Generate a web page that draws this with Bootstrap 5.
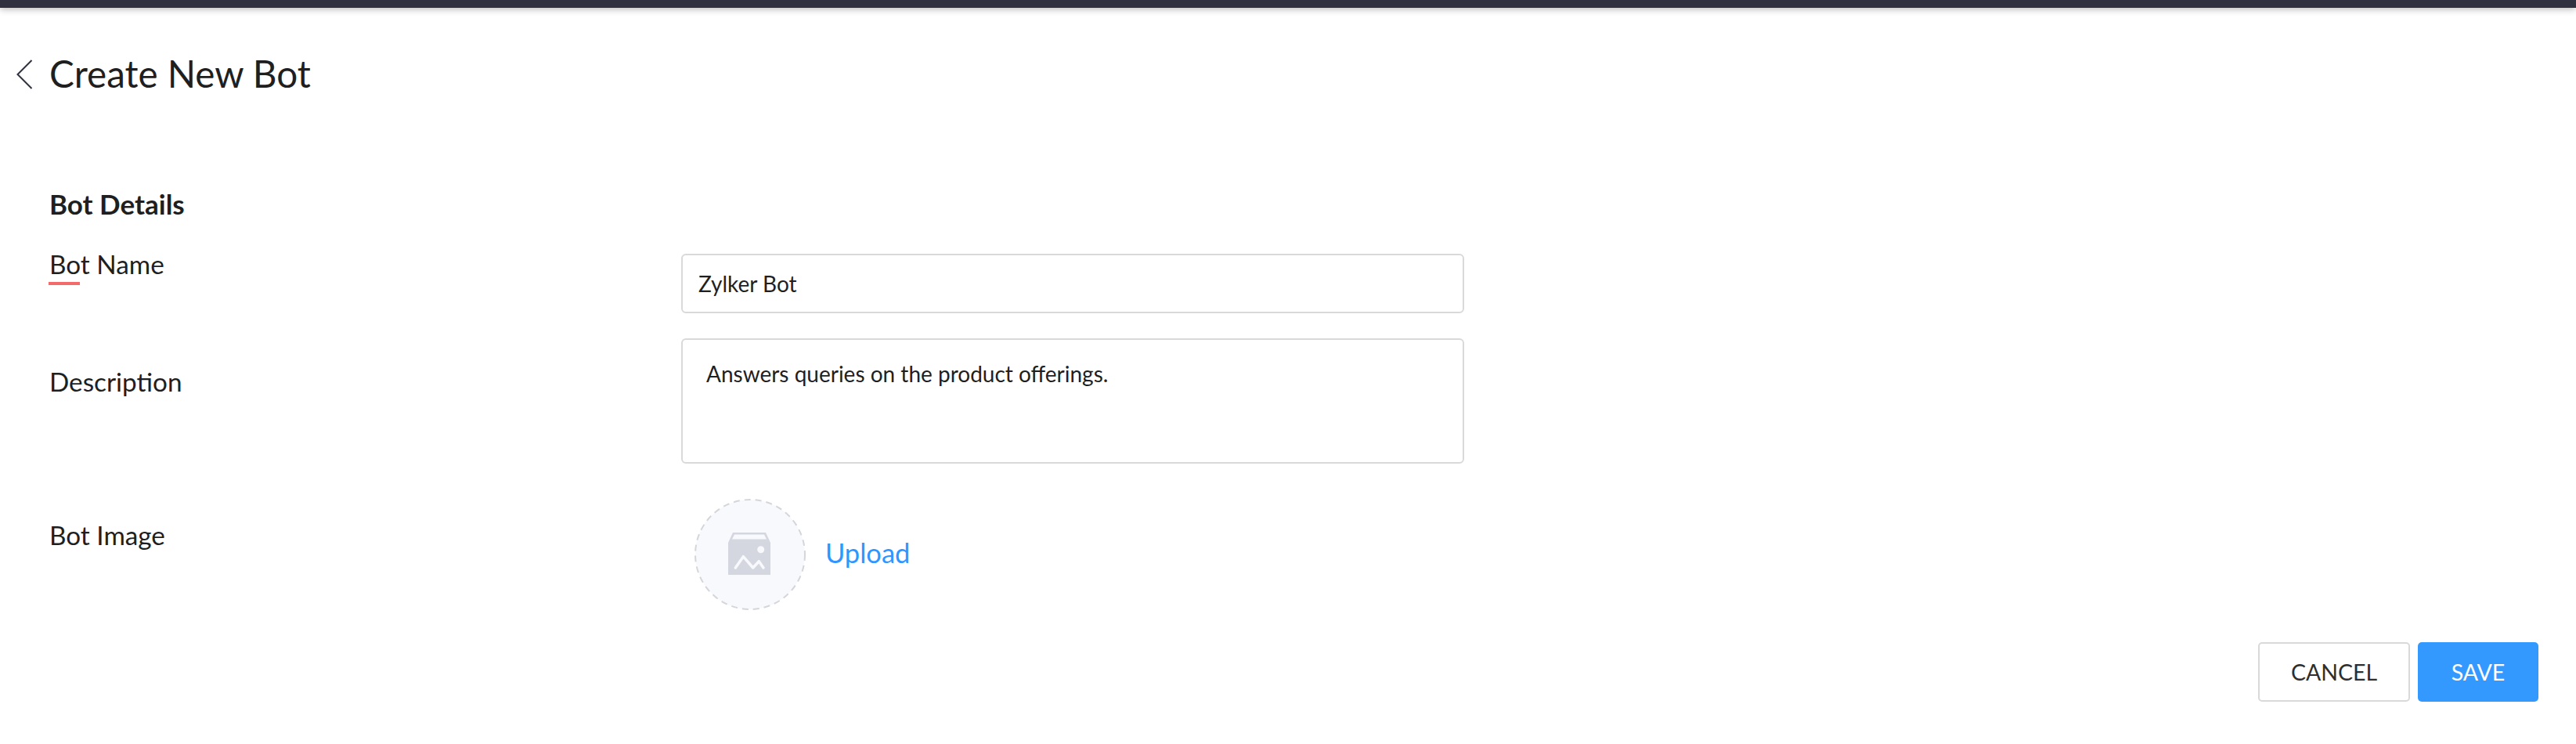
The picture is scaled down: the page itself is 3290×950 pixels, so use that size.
<!doctype html>
<html lang="en">
<head>
<meta charset="utf-8">
<title>Create New Bot</title>
<link href="https://cdn.jsdelivr.net/npm/bootstrap@5.3.0/dist/css/bootstrap.min.css" rel="stylesheet">
<style>
html,body{height:950px;overflow:hidden;background:#fff;}
body{font-family:Lato,"Liberation Sans",sans-serif;color:#1f1f1f;}
.topstrip{height:10px;background:#2f3140;box-shadow:0 2px 8px rgba(0,0,0,.28);}
.titlerow{padding:56px 0 0 20px;}
.backicon{width:24px;height:40px;margin:2px 19px 0 0;flex:none;}
.pagetitle{font-size:47.600px;font-weight:400;line-height:56px;margin:0;color:#1f1f1f;}
.formzone{padding:118px 48px 0 63px;}
.sectionhead{font-size:35px;font-weight:700;line-height:40px;margin:0;height:77px;color:#1f1f1f;}
.fieldrow{display:flex;}
.fieldlabel{width:807px;flex:none;font-size:33.300px;line-height:40px;margin:0;position:relative;}
.rowname{margin-bottom:32px;}
.rowname .fieldbox{margin-top:7px;}
.rowdesc{margin-bottom:45px;}
.rowdesc .fieldlabel{padding-top:35px;}
.rowimg{margin-bottom:41px;}
.rowimg .fieldlabel{padding-top:26px;}
.fieldbox.form-control{width:1000px;flex:none;border:2px solid #d9d9d9;border-radius:6px;color:#1f1f1f;font-size:28px;box-shadow:none;}
.inputbox.form-control{height:76px;padding:0 20px;}
.descbox.form-control{height:160px;padding:23px 30px;line-height:40px;resize:none;}
.redmark{position:absolute;left:-1px;top:43px;width:40px;height:4px;background:#f26a6a;}
.avatarshell{width:142px;height:142px;margin-left:17px;flex:none;}
.uploadlink{font-size:34.500px;color:#3096ff;text-decoration:none;margin:0 0 5px 25px;}
.actionbtn.btn{height:76px;font-size:28.500px;border-radius:5px;padding:0;text-transform:uppercase;line-height:1;}
.cancelbtn.btn{width:194px;border:2px solid #d9d9d9;background:#fff;color:#2e2e2e;}
.savebtn.btn{width:154px;border:0;background:#3399ff;color:#fff;margin-left:10px;}
</style>
</head>
<body>
<div class="topstrip"></div>
<header class="titlerow d-flex align-items-center">
  <svg class="backicon" viewBox="0 0 24 40" aria-hidden="true"><path d="M20.5 2 2.500 20 20.500 38" fill="none" stroke="#2f3140" stroke-width="2"/></svg>
  <h1 class="pagetitle">Create New Bot</h1>
</header>
<main class="formzone">
  <h2 class="sectionhead">Bot Details</h2>
  <form>
    <div class="fieldrow rowname">
      <label class="fieldlabel" for="botname">Bot Name<span class="redmark"></span></label>
      <input id="botname" class="form-control fieldbox inputbox" value="Zylker Bot">
    </div>
    <div class="fieldrow rowdesc">
      <label class="fieldlabel" for="botdesc">Description</label>
      <textarea id="botdesc" class="form-control fieldbox descbox">Answers queries on the product offerings.</textarea>
    </div>
    <div class="fieldrow rowimg">
      <div class="fieldlabel">Bot Image</div>
      <div class="d-flex align-items-center">
        <svg class="avatarshell" viewBox="0 0 142 142" aria-hidden="true">
          <circle cx="71" cy="71" r="70" fill="#f8f9fd" stroke="#d5d6da" stroke-width="2" stroke-dasharray="8 6"/>
          <path d="M49 43H91L97 56V97H43V56Z" fill="#d5d7e0"/>
          <path d="M51 45.500H89L92 51.500H48Z" fill="#f8f9fd"/>
          <circle cx="84.700" cy="64.700" r="4.500" fill="#f8f9fd"/>
          <path d="M52.300 88 62.300 73.700 74.700 88 82.300 79.700 88 88" fill="none" stroke="#f8f9fd" stroke-width="3.500" stroke-linecap="round" stroke-linejoin="round"/>
        </svg>
        <a href="#" class="uploadlink">Upload</a>
      </div>
    </div>
    <div class="d-flex justify-content-end">
      <button type="button" class="btn actionbtn cancelbtn">Cancel</button>
      <button type="button" class="btn actionbtn savebtn">Save</button>
    </div>
  </form>
</main>
<script src="https://cdn.jsdelivr.net/npm/bootstrap@5.3.0/dist/js/bootstrap.bundle.min.js"></script>
</body>
</html>
